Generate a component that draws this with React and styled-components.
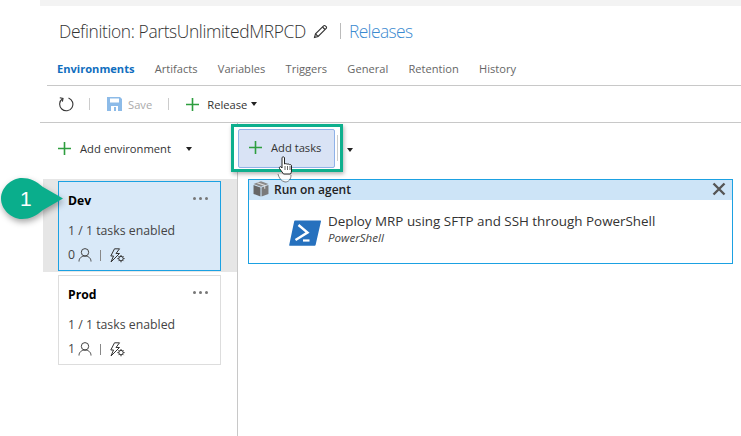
import styled, { createGlobalStyle } from "styled-components";

const GlobalStyle = createGlobalStyle`
  html, body {
    margin: 0;
    background: #fff;
    font-family: "Open Sans", "Noto Sans", sans-serif;
    color: #333;
  }
  body { overflow: hidden; }
`;

const Page = styled.div`
  position: relative;
  width: 741px;
  height: 436px;
  padding-left: 40px;
  box-sizing: border-box;
  overflow: hidden;
`;

const TopStrip = styled.div`
  height: 6px;
  background: #f3f3f3;
`;

const TitleRow = styled.div`
  display: flex;
  align-items: center;
  height: 50px;
  padding-left: 19px;
  font-size: 17.4px;
  font-weight: 300;
  letter-spacing: -0.37px;
  color: #333;
`;

const PencilBtn = styled.span`
  display: flex;
  margin: 0 12px 0 7px;
`;

const Releases = styled.span`
  border-left: 1px solid #bbb;
  padding-left: 8px;
  color: #3b8ad0;
  line-height: 16px;
  letter-spacing: -0.6px;
`;

const Tabs = styled.div`
  display: flex;
  gap: 20.3px;
  height: 30px;
  margin-left: 7px;
  padding-left: 10px;
  padding-top: 5px;
  box-sizing: border-box;
  border-bottom: 1px solid #c8c8c8;
  font-size: 11.1px;
  line-height: 15px;
`;

const Tab = styled.span`
  color: ${(p) => (p.$active ? "#106ebe" : "#666")};
  font-weight: ${(p) => (p.$active ? 700 : 400)};
`;

const Toolbar = styled.div`
  display: flex;
  align-items: center;
  height: 37px;
  padding-left: 18px;
  box-sizing: border-box;
  border-bottom: 1px solid #c8c8c8;
  font-size: 11.2px;
`;

const ToolSep = styled.span`
  width: 1px;
  height: 12px;
  background: #ccc;
  margin: 0 ${(p) => p.$after}px 0 ${(p) => p.$before}px;
`;

const ToolLabel = styled.span`
  color: ${(p) => (p.$muted ? "#aaa" : "#333")};
  margin-left: ${(p) => p.$left || 6}px;
`;

const Caret = styled.span`
  display: inline-block;
  width: 0;
  height: 0;
  border-left: 3.5px solid transparent;
  border-right: 3.5px solid transparent;
  border-top: 4px solid #222;
  margin-left: ${(p) => p.$left || 3}px;
  margin-top: ${(p) => p.$top || 0}px;
`;

const Body = styled.div`
  display: flex;
  height: 314px;
`;

const LeftCol = styled.div`
  width: 198px;
  box-sizing: border-box;
  border-right: 1px solid #c8c8c8;
  flex: none;
`;

const AddEnvRow = styled.div`
  display: flex;
  align-items: center;
  height: 56px;
  padding: 0 0 5px 18px;
  box-sizing: border-box;
  font-size: 11.2px;
`;

const CardSlot = styled.div`
  margin: ${(p) => (p.$selected ? "0 0 0 3px" : "1px 0 0 3px")};
  padding: 2px 15px 1px;
  background: ${(p) => (p.$selected ? "#e6e6e6" : "transparent")};
`;

const Card = styled.div`
  height: 90px;
  width: 163px;
  box-sizing: border-box;
  padding: 6px 9px 0;
  background: ${(p) => (p.$selected ? "#d9e9f8" : "#fff")};
  border: 1px solid ${(p) => (p.$selected ? "#1ba1e2" : "#ddd")};
`;

const CardHead = styled.div`
  display: flex;
  justify-content: space-between;
  align-items: center;
  height: 24px;
  font-size: 12.2px;
  font-weight: 700;
  color: #000;
`;

const Dots = styled.span`
  display: flex;
  gap: 3px;
  margin-right: 3px;
  margin-top: -4px;
  & > i {
    width: 3px;
    height: 3px;
    border-radius: 50%;
    background: #777;
  }
`;

const CardText = styled.div`
  margin-top: 11px;
  font-size: 12.3px;
  line-height: 16px;
  color: #444;
`;

const CardIcons = styled.div`
  display: flex;
  align-items: center;
  margin-top: 8px;
  font-size: 12.3px;
  line-height: 16px;
  color: #444;
`;

const Bar = styled.span`
  width: 1px;
  height: 11px;
  background: #888;
  margin: 0 9px 0 8px;
`;

const RightCol = styled.div`
  flex: 1;
  min-width: 0;
  display: flex;
  flex-direction: column;
`;

const TaskActions = styled.div`
  display: flex;
  align-items: flex-start;
  height: 56px;
  margin-left: -7px;
  padding-top: 1px;
  box-sizing: border-box;
  position: relative;
  z-index: 2;
`;

const Highlight = styled.div`
  width: 112px;
  height: 48px;
  box-sizing: border-box;
  border: 3px solid #0eaf8d;
  padding: 2px 6px 1px 4px;
  display: flex;
  box-shadow: 1px 2px 4px rgba(0, 0, 0, 0.3);
  background: #fff;
`;

const AddTasksBtn = styled.div`
  flex: 1;
  display: flex;
  align-items: center;
  padding: 0 0 2px 10px;
  background: #d9e3f5;
  border: 1px solid #8fb2e8;
  border-radius: 2px;
  font-size: 11.2px;
  color: #333;
  margin-right: 2px;
`;

const BtnSep = styled.span`
  width: 1px;
  background: #ccc;
  margin: 6px -4px 7px 0;
`;

const Cursor = styled.span`
  position: absolute;
  left: 46px;
  top: 33px;
  display: flex;
`;

const Panel = styled.div`
  margin: 0 8px 0 10px;
  height: 85px;
  box-sizing: border-box;
  border: 1px solid #1ba1e2;
`;

const PanelHead = styled.div`
  display: flex;
  align-items: center;
  height: 20px;
  box-sizing: border-box;
  padding: 0 6px 2px 4px;
  background: #cde4f7;
  font-size: 12px;
  font-weight: 600;
  color: #222;
`;

const PanelTitle = styled.span`
  flex: 1;
  margin-left: 5px;
`;

const TaskRow = styled.div`
  display: flex;
  align-items: flex-start;
  padding: 13px 0 0 40px;
`;

const IconSlot = styled.span`
  display: flex;
  margin-top: 7px;
`;

const TaskInfo = styled.div`
  margin-left: 7px;
`;

const TaskName = styled.div`
  font-size: 13.4px;
  line-height: 16px;
  color: #333;
`;

const TaskSub = styled.div`
  font-size: 11.6px;
  line-height: 17px;
  font-style: italic;
  color: #444;
`;

const Badge = styled.div`
  position: absolute;
  left: 0;
  top: 176px;
  width: 66px;
  height: 48px;
  display: flex;
`;

const BadgeNum = styled.span`
  position: absolute;
  left: 20px;
  top: 8px;
  font-family: "Liberation Sans", sans-serif;
  font-size: 21px;
  line-height: 30px;
  color: #fff;
`;

const BadgeSvg = styled.svg`
  overflow: visible;
  filter: drop-shadow(1px 3px 3px rgba(0, 0, 0, 0.35));
`;

const UserSvg = styled.svg`
  margin-left: 3px;
`;

const Plus = ({ size = 13 }) => (
  <svg width={size} height={size} viewBox="0 0 13 13">
    <path d="M6.5 0v13M0 6.5h13" stroke="#2e9e3f" strokeWidth="1.6" />
  </svg>
);

const PencilIcon = () => (
  <svg width="15" height="15" viewBox="0 0 15 15" fill="none" stroke="#333" strokeWidth="1.1">
    <path d="M1.5 13.5l1-3.6L10.6 1.8a1.2 1.2 0 0 1 1.7 0l.9.9a1.2 1.2 0 0 1 0 1.7L5.1 12.5z" />
    <path d="M9.5 3l2.5 2.5M2.6 10l2.4 2.4" />
  </svg>
);

const RefreshIcon = () => (
  <svg width="16" height="16" viewBox="0 0 16 16" fill="none" stroke="#333" strokeWidth="1.1">
    <path d="M4.5 2.8A6.6 6.6 0 1 0 10.5 2" />
    <path d="M1.8 1.8l3.2 0.6L4.4 5.6" />
  </svg>
);

const SaveIcon = () => (
  <svg width="15" height="14" viewBox="0 0 15 14">
    <path d="M0 0h13l2 2v12H0z" fill="#8dbbe8" />
    <path d="M3 1.5h9v4H3z" fill="#fff" />
    <path d="M4 9h7v5H4z" fill="#fff" />
    <path d="M7 10h2v4H7z" fill="#8dbbe8" />
  </svg>
);

const UserIcon = () => (
  <UserSvg width="14" height="14" viewBox="0 0 14 14" fill="none" stroke="#444" strokeWidth="1">
    <circle cx="7" cy="4.3" r="3.7" />
    <path d="M1 13.5c0-3.3 2.4-5.4 6-5.4s6 2.1 6 5.4" />
  </UserSvg>
);

const TriggerIcon = () => (
  <svg width="15" height="15" viewBox="0 0 15 15" fill="none" stroke="#333" strokeWidth="1">
    <path d="M4.5 0.8h5L6 5.5h3.5L1 14l2.5-6H0.8z" />
    <circle cx="11" cy="10.6" r="2.2" />
    <path d="M11 7v1.3M11 13v1.3M7.4 10.6h1.3M13.3 10.6h1.3M8.5 8.1l.9.9M12.6 12.2l.9.9M13.5 8.1l-.9.9M9.4 12.2l-.9.9" />
  </svg>
);

const BoxIcon = () => (
  <svg width="16" height="16" viewBox="0 0 15 15">
    <path d="M7.5 0.3L14.5 2.8 7.5 5.4 0.5 2.8z" fill="#8a8a8a" />
    <path d="M0.5 3.8l6.5 2.4V14.6L0.5 12.1z" fill="#666" />
    <path d="M14.5 3.8L8 6.2V14.6l6.5-2.5z" fill="#7a7a7a" />
    <path d="M4 1.6l7 2.6v3" stroke="#ddd" strokeWidth="1" fill="none" />
  </svg>
);

const CloseIcon = () => (
  <svg width="14" height="14" viewBox="0 0 14 14">
    <path d="M1.5 1.5l11 11M12.5 1.5l-11 11" stroke="#555" strokeWidth="2.4" />
  </svg>
);

const PowerShellIcon = () => (
  <svg width="32" height="26" viewBox="0 0 32 26">
    <path d="M6 0.5h25.5a.6.6 0 0 1 .5.7L26.6 25a1 1 0 0 1-1 .8H.8a.6.6 0 0 1-.6-.8L5.2 1.2A1 1 0 0 1 6 .5z" fill="#2671be" />
    <path d="M9.5 5l9 7.5L6.5 20" stroke="#fff" strokeWidth="2.4" fill="none" />
    <path d="M14 20.5h6.5" stroke="#fff" strokeWidth="2.2" />
  </svg>
);

const HandCursor = () => (
  <svg width="18" height="28" viewBox="0 0 18 28">
    <path d="M1 18c1 4 3 7 7 8 4 0 6-3 6-7" fill="#fff" stroke="#333" strokeWidth="0.8" opacity="0.75" />
    <path
      d="M5 1.5c.8-.8 2-.8 2.5 0V8c.8-.5 2-.5 2.5.3.8-.5 2-.4 2.4.4.9-.4 2 0 2.1 1V15c0 1.3-.4 2-1 3H6.5L2.5 12.5c-.7-1 .6-2.4 1.6-1.6L5 12z"
      fill="#fff"
      stroke="#222"
      strokeWidth="1"
    />
    <path d="M8 10v4M10.5 10v4M13 10v4" stroke="#222" strokeWidth="0.7" />
  </svg>
);

const BadgeShape = () => (
  <BadgeSvg width="66" height="48" viewBox="0 0 66 48">
    <path d="M22 2C30 2 36 5 43 11L63 22.5 43 34C36 40 30 43 22 43 11 43 1 33 1 22.5S11 2 22 2z" fill="#0aae8c" />
  </BadgeSvg>
);

const cards = [
  { name: "Dev", selected: true, approvers: 0 },
  { name: "Prod", selected: false, approvers: 1 },
];

const tabs = ["Artifacts", "Variables", "Triggers", "General", "Retention", "History"];

export default function App() {
  return (
    <Page>
      <GlobalStyle />
      <TopStrip />
      <TitleRow>
        <span>Definition: PartsUnlimitedMRPCD</span>
        <PencilBtn>
          <PencilIcon />
        </PencilBtn>
        <Releases>Releases</Releases>
      </TitleRow>
      <Tabs>
        <Tab $active>Environments</Tab>
        {tabs.map((t) => (
          <Tab key={t}>{t}</Tab>
        ))}
      </Tabs>
      <Toolbar>
        <RefreshIcon />
        <ToolSep $before={15} $after={17} />
        <SaveIcon />
        <ToolLabel $muted>Save</ToolLabel>
        <ToolSep $before={16} $after={17} />
        <Plus />
        <ToolLabel $left={8}>Release</ToolLabel>
        <Caret $left={4} />
      </Toolbar>
      <Body>
        <LeftCol>
          <AddEnvRow>
            <Plus />
            <ToolLabel $left={9}>Add environment</ToolLabel>
            <Caret $left={15} />
          </AddEnvRow>
          {cards.map((c) => (
            <CardSlot key={c.name} $selected={c.selected}>
              <Card $selected={c.selected}>
                <CardHead>
                  {c.name}
                  <Dots>
                    <i />
                    <i />
                    <i />
                  </Dots>
                </CardHead>
                <CardText>1 / 1 tasks enabled</CardText>
                <CardIcons>
                  {c.approvers}
                  <UserIcon />
                  <Bar />
                  <TriggerIcon />
                </CardIcons>
              </Card>
            </CardSlot>
          ))}
        </LeftCol>
        <RightCol>
          <TaskActions>
            <Highlight>
              <AddTasksBtn>
                <Plus />
                <ToolLabel $left={9}>Add tasks</ToolLabel>
              </AddTasksBtn>
              <BtnSep />
            </Highlight>
            <Caret $left={4} $top={24} />
            <Cursor>
              <HandCursor />
            </Cursor>
          </TaskActions>
          <Panel>
            <PanelHead>
              <BoxIcon />
              <PanelTitle>Run on agent</PanelTitle>
              <CloseIcon />
            </PanelHead>
            <TaskRow>
              <IconSlot>
                <PowerShellIcon />
              </IconSlot>
              <TaskInfo>
                <TaskName>Deploy MRP using SFTP and SSH through PowerShell</TaskName>
                <TaskSub>PowerShell</TaskSub>
              </TaskInfo>
            </TaskRow>
          </Panel>
        </RightCol>
      </Body>
      <Badge>
        <BadgeShape />
        <BadgeNum>1</BadgeNum>
      </Badge>
    </Page>
  );
}
